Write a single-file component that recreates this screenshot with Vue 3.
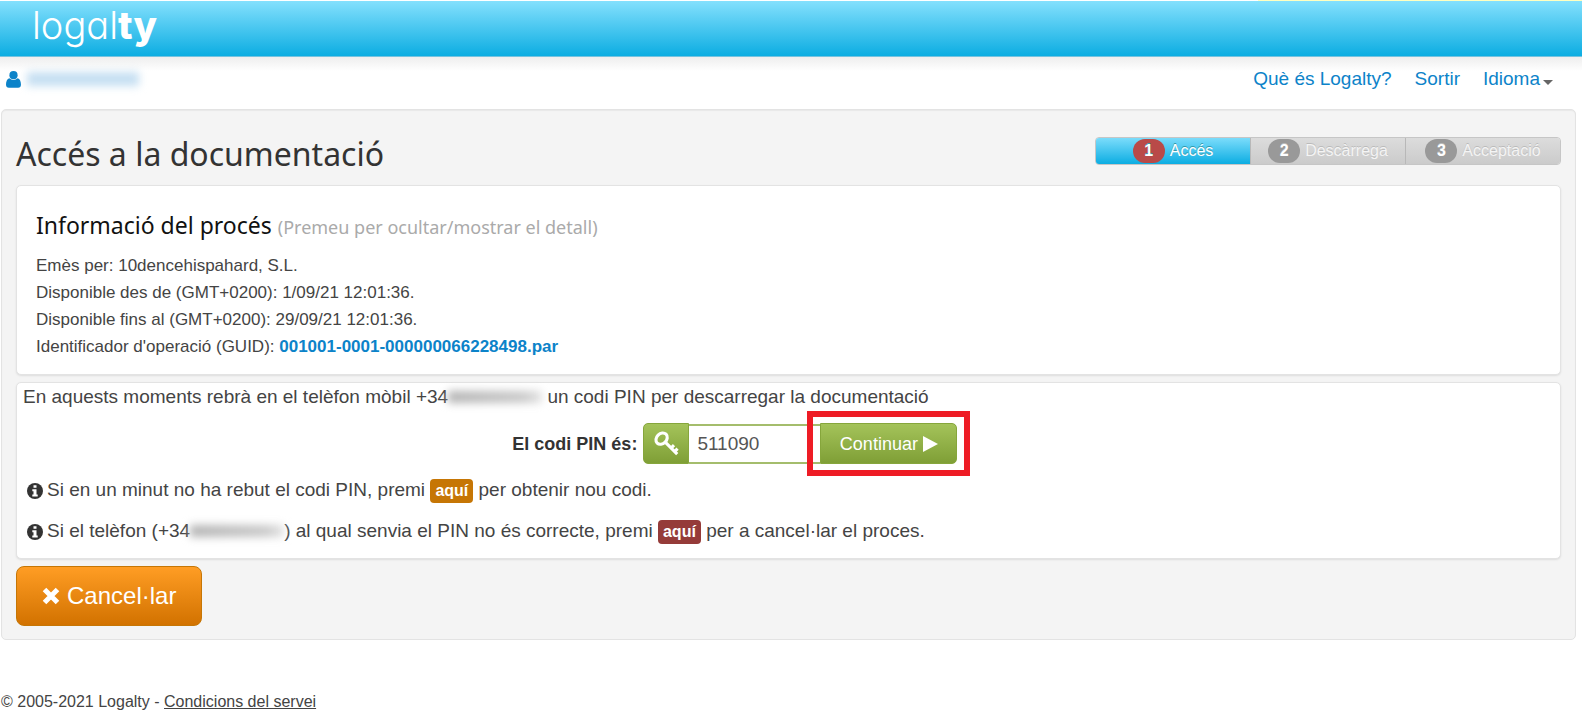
<script setup>
import { ref } from 'vue'

const pin = ref('511090')
const showDetail = ref(true)
const steps = [
  { n: 1, label: 'Accés', active: true },
  { n: 2, label: 'Descàrrega', active: false },
  { n: 3, label: 'Acceptació', active: false },
]
const details = [
  'Emès per: 10dencehispahard, S.L.',
  'Disponible des de (GMT+0200): 1/09/21 12:01:36.',
  'Disponible fins al (GMT+0200): 29/09/21 12:01:36.',
]
</script>

<template>
  <div class="page">
    <div class="strip"></div>
    <header class="brandbar">
      <a href="#" class="logo">logal<b>ty</b></a>
    </header>

    <nav class="topnav">
      <div class="user">
        <svg class="user-icon" viewBox="0 0 15 17" aria-hidden="true">
          <circle cx="7.5" cy="4.2" r="4.1" />
          <path d="M3.4 7.2C1 7.800 0 10.600 0 13.600 0 15.700 1.200 16.800 2.800 16.800h9.400c1.600 0 2.800-1.100 2.800-3.200 0-3-1-5.800-3.400-6.400a5.600 5.600 0 0 1-8.200 0z" />
        </svg>
        <span class="masked masked-name"></span>
      </div>
      <div class="links">
        <a href="#">Què és Logalty?</a>
        <a href="#">Sortir</a>
        <a href="#" class="lang">Idioma<span class="caret"></span></a>
      </div>
    </nav>

    <main class="panel">
      <div class="panel-head">
        <h1>Accés a la documentació</h1>
        <ol class="steps">
          <li v-for="s in steps" :key="s.n" :class="{ active: s.active }">
            <span class="badge">{{ s.n }}</span>
            <span>{{ s.label }}</span>
          </li>
        </ol>
      </div>

      <section class="card info">
        <h2 @click="showDetail = !showDetail">
          Informació del procés <small>(Premeu per ocultar/mostrar el detall)</small>
        </h2>
        <div v-if="showDetail">
          <p v-for="d in details" :key="d">{{ d }}</p>
          <p>Identificador d'operació (GUID): <a href="#">001001-0001-000000066228498.par</a></p>
        </div>
      </section>

      <section class="card pin">
        <p class="lead">
          En aquests moments rebrà en el telèfon mòbil +34<span class="masked masked-phone"></span>
          un codi PIN per descarregar la documentació
        </p>
        <form class="pin-row" @submit.prevent>
          <label for="pin">El codi PIN és:</label>
          <span class="addon">
            <svg viewBox="0 0 24 24" aria-hidden="true">
              <path d="M11 11 22.300 22.300M16.200 16.600l3-3M19.600 20l3-3" />
              <ellipse cx="7.300" cy="7.300" rx="6" ry="4.800" transform="rotate(-45 7.300 7.300)" />
            </svg>
          </span>
          <input id="pin" v-model="pin" type="text" />
          <span class="submit-wrap">
            <button type="submit">
              <span>Continuar</span>
              <svg viewBox="0 0 15 16" aria-hidden="true"><path d="M0 0 15 8 0 16z" /></svg>
            </button>
            <span class="marker"></span>
          </span>
        </form>
        <p class="note">
          <svg class="info-icon" viewBox="0 0 16 16" aria-hidden="true">
            <circle cx="8" cy="8" r="8" />
            <path d="M6.500 2.300h3v2.500h-3zM5.300 6.200h4.200v5.200h1.200v2H5.300v-2h1.200V8.200H5.300z" />
          </svg>
          <span>Si en un minut no ha rebut el codi PIN, premi <a href="#" class="tag amber">aquí</a> per obtenir nou codi.</span>
        </p>
        <p class="note">
          <svg class="info-icon" viewBox="0 0 16 16" aria-hidden="true">
            <circle cx="8" cy="8" r="8" />
            <path d="M6.500 2.300h3v2.500h-3zM5.300 6.200h4.200v5.200h1.200v2H5.300v-2h1.200V8.200H5.300z" />
          </svg>
          <span>Si el telèfon (+34<span class="masked masked-phone"></span>) al qual senvia el PIN no és correcte, premi <a href="#" class="tag red">aquí</a> per a cancel·lar el proces.</span>
        </p>
      </section>

      <button type="button" class="cancel">
        <svg viewBox="0 0 18 18" aria-hidden="true"><path d="M2.500 2.500l13 13M15.500 2.500l-13 13" /></svg>
        <span>Cancel·lar</span>
      </button>
    </main>

    <footer>© 2005-2021 Logalty - <a href="#">Condicions del servei</a></footer>
  </div>
</template>

<style>
body {
  margin: 0;
  background: #fff;
}
</style>

<style scoped>
.page {
  font-family: "Liberation Sans", Arial, sans-serif;
  font-size: 19px;
  line-height: 24px;
  color: #444;
}
h1, h2, p, ol {
  margin: 0;
  padding: 0;
  font-weight: 400;
}
a {
  color: #0c83c9;
  text-decoration: none;
}
.strip {
  height: 1px;
  background: linear-gradient(90deg, #fff 79.5%, #ffffc0 79.5%);
}
.brandbar {
  display: flex;
  align-items: flex-start;
  height: 55px;
  padding-left: 32px;
  border-bottom: 1px solid #74c3e0;
  background: linear-gradient(#84e0fd, #0cade2);
}
.logo {
  color: #fff;
  font-family: Inter, Lato, sans-serif;
  font-feature-settings: "cv11";
  font-size: 38px;
  font-weight: 300;
  line-height: 48px;
}
.logo b {
  font-weight: 800;
}
.topnav {
  display: flex;
  justify-content: space-between;
  align-items: center;
  height: 44px;
  padding: 0 29px 8px 6px;
  background: linear-gradient(#eee, #fff 14px);
}
.user {
  display: flex;
  align-items: center;
  gap: 6px;
}
.user-icon {
  width: 15px;
  height: 17px;
  fill: #0c83c9;
}
.masked {
  display: inline-block;
  filter: blur(4px);
}
.masked-name {
  width: 112px;
  height: 14px;
  background: #c5dff2;
}
.masked-phone {
  width: 94px;
  height: 12px;
  background: linear-gradient(90deg, #b4b4b4, #c8c8c8 80%, #e4e4e4);
}
.links {
  display: flex;
  gap: 23px;
}
.lang {
  display: flex;
  align-items: center;
  gap: 3px;
}
.caret {
  margin-top: 6px;
  border: 5px solid transparent;
  border-top-color: #666;
  border-bottom: 0;
}
.panel {
  margin: 0 6px 0 1px;
  padding: 27px 14px 13px;
  border: 1px solid #e3e3e3;
  border-radius: 5px;
  background: #f4f4f4;
  box-shadow: inset 0 1px 1px #e8e8e8;
}
.panel-head {
  display: flex;
  justify-content: space-between;
  align-items: flex-start;
  height: 48px;
}
h1 {
  font-family: "Noto Sans", sans-serif;
  font-size: 32px;
  line-height: 34px;
  color: #333;
}
.steps {
  display: flex;
  width: 466px;
  height: 28px;
  box-sizing: border-box;
  list-style: none;
  border: 1px solid #c6c6c6;
  border-radius: 4px;
  overflow: hidden;
  font-size: 16px;
}
.steps li {
  flex: 1;
  display: flex;
  align-items: center;
  justify-content: center;
  gap: 5px;
  color: #f4f4f4;
  background: linear-gradient(#dcdcdc, #cbcbcb);
  text-shadow: 0 -1px 0 #bbb;
}
.steps li + li {
  border-left: 1px solid #b8b8b8;
}
.steps li.active {
  color: #fff;
  background: linear-gradient(#7bdcfb, #0cade2);
  text-shadow: 0 -1px 0 #39a;
}
.badge {
  width: 32px;
  border-radius: 12px;
  background: #999;
  color: #fff;
  font-weight: 700;
  text-align: center;
}
.active .badge {
  background: #b94a48;
}
.card {
  border: 1px solid #e3e3e3;
  border-radius: 5px;
  background: #fff;
  box-shadow: 0 1px 2px #ddd;
}
.info {
  padding: 21px 19px 14px;
  font-size: 17px;
  line-height: 27px;
}
.info h2 {
  margin-bottom: 7px;
  font-family: "Noto Sans", sans-serif;
  font-size: 23px;
  line-height: 36px;
  color: #111;
  cursor: pointer;
}
.info small {
  font-size: 18px;
  color: #aaa;
}
.info a {
  font-weight: 700;
}
.pin {
  margin-top: 7px;
  padding: 2px 6px 14px;
}
.pin-row {
  display: flex;
  align-items: center;
  margin: 14px 0;
  font-size: 18px;
}
.pin-row label {
  flex: 0 0 40%;
  margin: 0 6px 0 2px;
  font-weight: 700;
  text-align: right;
  color: #333;
}
.addon {
  display: flex;
  align-items: center;
  justify-content: center;
  width: 46px;
  height: 41px;
  box-sizing: border-box;
  border: 1px solid #86a63c;
  border-radius: 5px 0 0 5px;
  background: linear-gradient(#a4c35a, #7f9f36);
}
.addon svg {
  width: 25px;
  height: 25px;
  fill: none;
  stroke: #fff;
  stroke-width: 3;
}
input {
  width: 131px;
  height: 40px;
  box-sizing: border-box;
  padding: 0 8px;
  border: solid #a4bd6c;
  border-width: 2px 0;
  font: inherit;
  font-size: 19px;
  color: #555;
  outline: 0;
}
.submit-wrap {
  position: relative;
}
.pin-row button {
  display: flex;
  align-items: center;
  justify-content: center;
  gap: 5px;
  width: 137px;
  height: 41px;
  padding: 0;
  border: 1px solid #86a63c;
  border-radius: 0 5px 5px 0;
  background: linear-gradient(#a4c35a, #7f9f36);
  color: #fff;
  font: inherit;
}
.pin-row button svg {
  width: 15px;
  height: 16px;
  fill: #fff;
}
.marker {
  position: absolute;
  inset: -12px -13px;
  border: 6px solid #ee1c25;
  pointer-events: none;
}
.note {
  display: flex;
  align-items: center;
  gap: 4px;
  margin-left: 4px;
}
.note + .note {
  margin-top: 16px;
}
.info-icon {
  width: 16px;
  height: 16px;
  fill: #333;
}
.info-icon path {
  fill: #fff;
}
.tag {
  display: inline-block;
  padding: 0 5px;
  border-radius: 4px;
  color: #fff;
  font-size: 16px;
  font-weight: 700;
}
.amber {
  background: #c67605;
}
.red {
  background: #953b39;
}
.cancel {
  display: flex;
  align-items: center;
  gap: 7px;
  height: 60px;
  margin-top: 7px;
  padding: 0 25px;
  border: 1px solid #c67605;
  border-radius: 8px;
  background: linear-gradient(#ff9d24, #d27200);
  color: #fff;
  font: inherit;
  font-size: 24px;
}
.cancel svg {
  width: 18px;
  height: 18px;
  fill: none;
  stroke: #fff;
  stroke-width: 5;
}
footer {
  margin-top: 50px;
  padding: 0 1px;
  font-size: 16px;
}
footer a {
  color: inherit;
  text-decoration: underline;
}
</style>
